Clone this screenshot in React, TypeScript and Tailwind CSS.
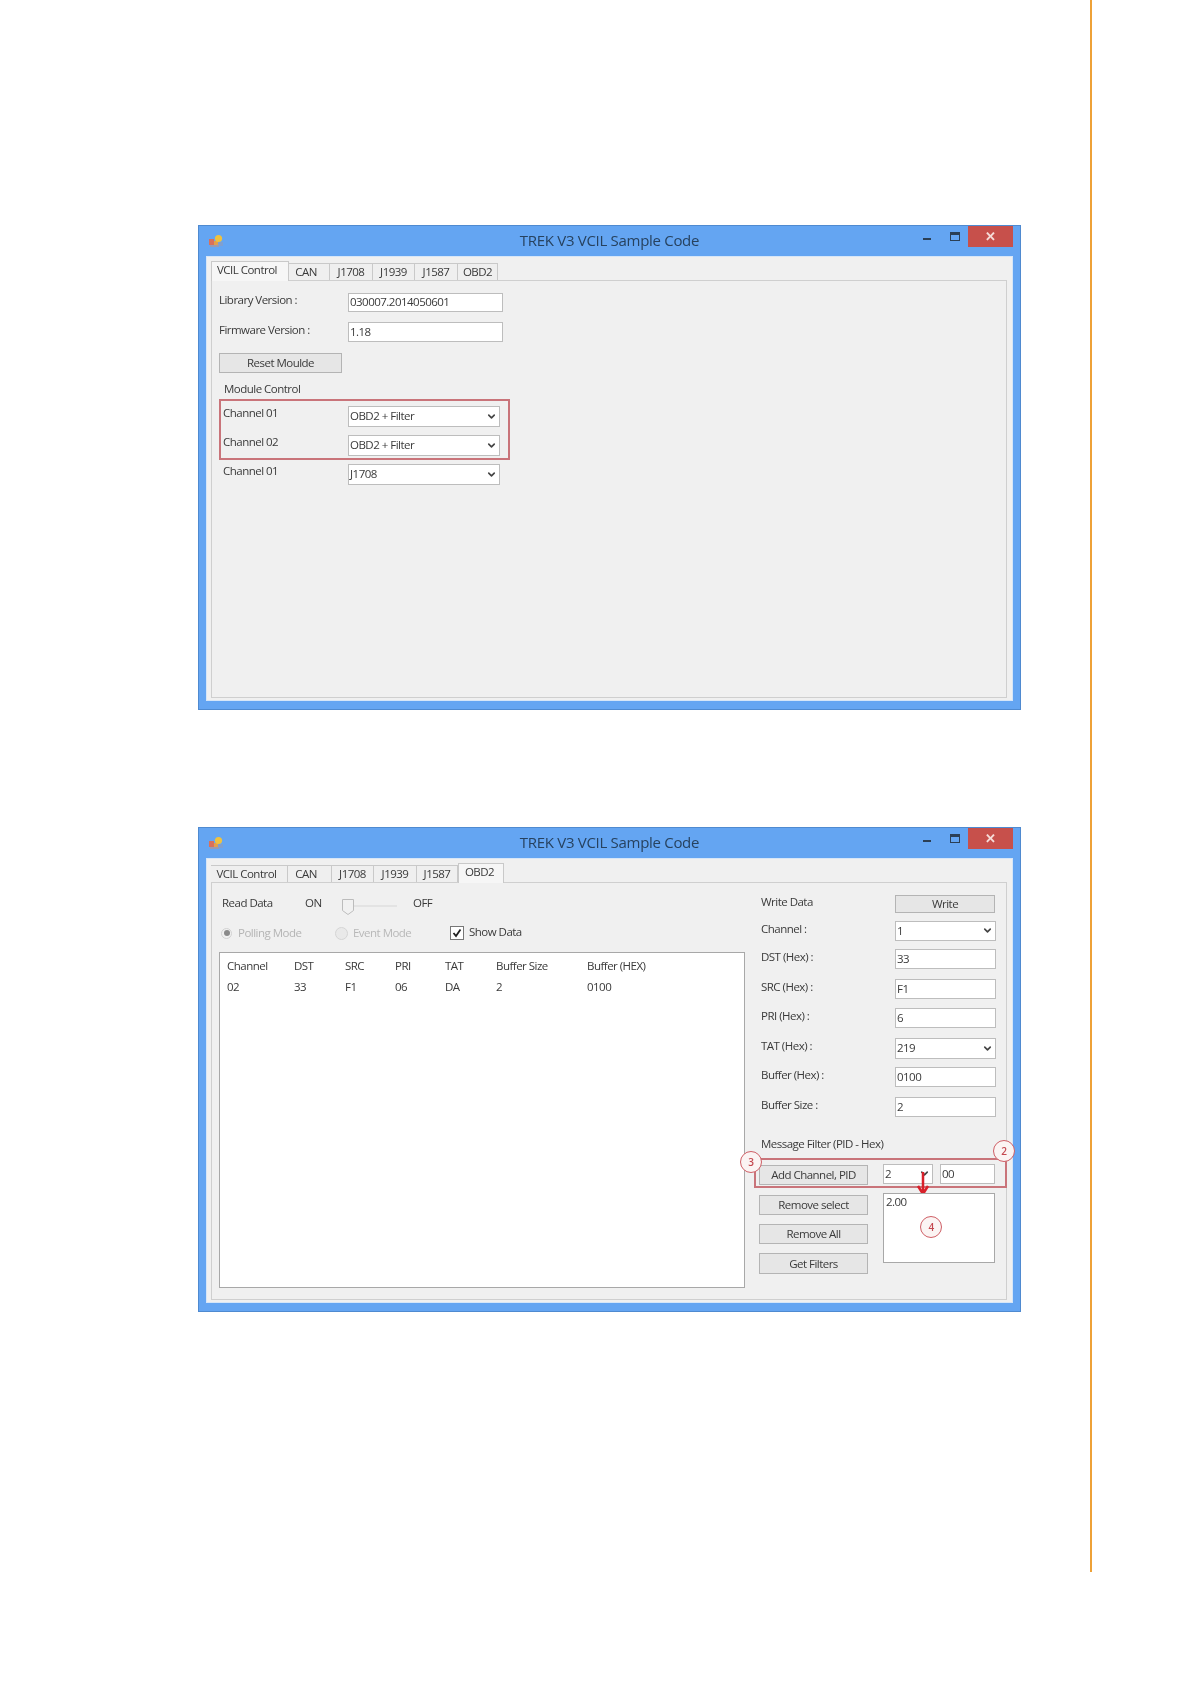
import { ChevronDown } from "lucide-react";

const TEXT = "text-[11.5px] leading-[14px] tracking-[-0.045em] text-[#3a3a3a]";
const FIELD = "border border-[#bdbdbd] bg-white pl-[1px] pb-[1px] flex items-center";
const BUTTON = "flex items-center justify-center border border-[#b4b4b4] bg-[#e6e6e6]";

type Tab = { label: string; width: string; active?: boolean };

const TABS_CONTROL: Tab[] = [
  { label: "VCIL Control", width: "w-[78px] pr-[6px]", active: true },
  { label: "CAN", width: "w-[41px] pr-[6px]" },
  { label: "J1708", width: "w-[43px]" },
  { label: "J1939", width: "w-[42px]" },
  { label: "J1587", width: "w-[43px]" },
  { label: "OBD2", width: "w-[40px]" },
];

const TABS_OBD: Tab[] = [
  { label: "VCIL Control", width: "w-[77px] pr-[5px]" },
  { label: "CAN", width: "w-[44px] pr-[7px]" },
  { label: "J1708", width: "w-[42px]" },
  { label: "J1939", width: "w-[43px]" },
  { label: "J1587", width: "w-[41px]" },
  { label: "OBD2", width: "w-[46px] pr-[3px]", active: true },
];

const COLUMNS = [
  { label: "Channel", value: "02", width: "w-[67px]" },
  { label: "DST", value: "33", width: "w-[51px]" },
  { label: "SRC", value: "F1", width: "w-[50px]" },
  { label: "PRI", value: "06", width: "w-[50px]" },
  { label: "TAT", value: "DA", width: "w-[51px]" },
  { label: "Buffer Size", value: "2", width: "w-[91px]" },
  { label: "Buffer (HEX)", value: "0100", width: "w-[90px]" },
];

const WRITE_FIELDS = [
  { label: "Channel :", value: "1", select: true, row: "mt-[8px] h-[20px]" },
  { label: "DST (Hex) :", value: "33", row: "mt-[8px] h-[20px]" },
  { label: "SRC (Hex) :", value: "F1", row: "mt-[10px] h-[20px]" },
  { label: "PRI (Hex) :", value: "6", row: "mt-[9px] h-[20px]" },
  { label: "TAT (Hex) :", value: "219", select: true, row: "mt-[10px] h-[21px]" },
  { label: "Buffer (Hex) :", value: "0100", focus: true, row: "mt-[8px] h-[20px]" },
  { label: "Buffer Size :", value: "2", row: "mt-[10px] h-[20px]" },
];

function Chevron() {
  return <ChevronDown className="ml-auto mr-[2px] h-[11px] w-[11px] text-[#444]" strokeWidth={3.5} />;
}

function WindowIcon() {
  return (
    <svg width="15" height="14" viewBox="0 0 15 14">
      <rect x="0" y="5" width="5" height="6" fill="#d9705a" />
      <rect x="5" y="7" width="4" height="5" fill="#e2a04c" />
      <circle cx="9.5" cy="4.5" r="3.6" fill="#efc23f" />
      <rect x="9" y="8" width="5" height="4" fill="#7f9fd0" />
      <rect x="1" y="11" width="9" height="2" fill="#9a9ab0" />
    </svg>
  );
}

function AppWindow({ tabs, children }: { tabs: Tab[]; children: React.ReactNode }) {
  return (
    <div className="flex h-[485px] w-[823px] flex-col border border-[#4f8ad0] bg-[#64a5f2] blur-[0.5px]">
      {/* title bar */}
      <div className="grid h-[30px] shrink-0 grid-cols-[1fr_auto_1fr]">
        <div className="flex items-center pl-[10px]">
          <WindowIcon />
        </div>
        <div className="pt-[4px] text-[15px] leading-[20px] tracking-[-0.02em] text-[#27425f]">
          TREK V3 VCIL Sample Code
        </div>
        <div className="flex items-start justify-end pr-[7px]">
          <div className="mr-[19px] mt-[12px] h-[2px] w-[8px] bg-[#2b3f55]" />
          <div className="mr-[8px] mt-[6px] h-[9px] w-[10px] border border-t-[3px] border-[#2b3f55]" />
          <div className="flex h-[21px] w-[45px] items-center justify-center bg-[#c7504b] text-[13px] font-bold leading-none text-[#f6dcd8]">
            ✕
          </div>
        </div>
      </div>

      {/* client area */}
      <div className="mx-[7px] mb-[8px] flex flex-1 flex-col border border-[#d6e6f8] bg-[#f0f0f0] pl-[4px] pr-[5px] pb-[2px]">
        <div className="relative z-10 flex h-[23px] shrink-0 items-end">
          {tabs.map((t) => (
            <div
              key={t.label}
              className={`flex items-center justify-center border border-[#c9c9c9] ${t.width} ${
                t.active
                  ? "-mb-px h-[20px] border-b-0 bg-[#f6f6f6] pb-[4px]"
                  : "h-[17px] border-l-0 border-b-0 bg-[#efefef] pb-[1px]"
              } ${TEXT}`}
            >
              {t.label}
            </div>
          ))}
        </div>
        <div className="flex-1 border border-[#cfcfcf] bg-[#f0f0f0]">{children}</div>
      </div>
    </div>
  );
}

function ChannelRow({ label, value, className = "" }: { label: string; value: string; className?: string }) {
  return (
    <div className={`flex h-[21px] items-start ${className}`}>
      <div className={`w-[125px] ${TEXT}`}>{label}</div>
      <div className={`h-[21px] w-[152px] ${FIELD} ${TEXT}`}>
        {value}
        <Chevron />
      </div>
    </div>
  );
}

function ControlPanel() {
  return (
    <div className="pl-[7px] pt-[12px]">
      <div className="flex h-[19px] items-center">
        <div className={`w-[129px] pb-[5px] ${TEXT}`}>Library Version :</div>
        <div className={`h-[19px] w-[155px] ${FIELD} ${TEXT}`}>030007.2014050601</div>
      </div>
      <div className="mt-[10px] flex h-[20px] items-center">
        <div className={`w-[129px] pb-[5px] ${TEXT}`}>Firmware Version :</div>
        <div className={`h-[20px] w-[155px] ${FIELD} ${TEXT}`}>1.18</div>
      </div>
      <div className={`mt-[11px] h-[20px] w-[123px] ${BUTTON} ${TEXT}`}>Reset Moulde</div>
      <div className={`ml-[5px] mt-[9px] ${TEXT}`}>Module Control</div>

      <div className="mt-[3px] h-[61px] w-[291px] border-2 border-[#c9747a] pl-[2px] pt-[5px]">
        <ChannelRow label="Channel 01" value="OBD2 + Filter" />
        <ChannelRow label="Channel 02" value="OBD2 + Filter" className="mt-[8px]" />
      </div>
      <ChannelRow label="Channel 01" value="J1708" className="ml-[4px] mt-[4px]" />
    </div>
  );
}

function Callout({ n, className }: { n: number; className: string }) {
  return (
    <div
      className={`absolute flex h-[22px] w-[22px] items-center justify-center rounded-full border-[1.5px] border-[#cf5f66] bg-[#fbf4f3] text-[10px] font-semibold text-[#c4474e] ${className}`}
    >
      {n}
    </div>
  );
}

function ObdPanel() {
  return (
    <div className="flex">
      {/* read data + list */}
      <div className="ml-[7px] mr-[14px] w-[526px] pt-[12px]">
        <div className="flex h-[16px] items-start pl-[3px]">
          <div className={`w-[83px] pt-[1px] ${TEXT}`}>Read Data</div>
          <div className={`w-[37px] pt-[1px] ${TEXT}`}>ON</div>
          <svg width="71" height="20" viewBox="0 0 71 20" className="shrink-0">
            <rect x="11" y="10" width="44" height="2" fill="#e3e3e3" />
            <path d="M0.5 4.5H11.5V15.5L6 19.5L0.5 15.5Z" fill="#f1f1f1" stroke="#bcbcbc" />
          </svg>
          <div className={`pt-[1px] ${TEXT}`}>OFF</div>
        </div>

        <div className="mt-[15px] flex h-[14px] items-center pl-[3px]">
          <div className="flex w-[113px] items-center">
            <span className="ml-[-1px] flex h-[11px] w-[11px] items-center justify-center rounded-full border border-[#d2d2d2]">
              <span className="h-[6px] w-[6px] rounded-full bg-[#8a8a8a]" />
            </span>
            <span className={`ml-[6px] ${TEXT} text-[#b4b4b4]`}>Polling Mode</span>
          </div>
          <div className="flex w-[115px] items-center">
            <span className="h-[13px] w-[13px] rounded-full border border-[#d5d5d5] bg-[#e9e9e9]" />
            <span className={`ml-[5px] ${TEXT} text-[#b8b8b8]`}>Event Mode</span>
          </div>
          <span className="flex h-[14px] w-[14px] items-center justify-center border border-[#777] bg-white">
            <svg width="10" height="10" viewBox="0 0 10 10">
              <path d="M1.5 5L4 8L8.5 1.5" fill="none" stroke="#222" strokeWidth="1.8" />
            </svg>
          </span>
          <span className={`mb-[3px] ml-[5px] ${TEXT}`}>Show Data</span>
        </div>

        <div className="mt-[12px] h-[336px] border border-[#a8a8a8] bg-white pl-[7px]">
          <div className={`flex pt-[6px] ${TEXT}`}>
            {COLUMNS.map((c) => (
              <div key={c.label} className={c.width}>
                {c.label}
              </div>
            ))}
          </div>
          <div className={`mt-[7px] flex ${TEXT}`}>
            {COLUMNS.map((c) => (
              <div key={c.label} className={c.width}>
                {c.value}
              </div>
            ))}
          </div>
        </div>
      </div>

      {/* write data + filters */}
      <div className="w-[246px] pt-[12px]">
        <div className="flex h-[18px] items-center">
          <div className={`w-[136px] pb-[5px] pl-[2px] ${TEXT}`}>Write Data</div>
          <div className={`h-[18px] w-[100px] ${BUTTON} ${TEXT}`}>Write</div>
        </div>
        {WRITE_FIELDS.map((f) => (
          <div key={f.label} className={`flex items-center ${f.row}`}>
            <div className={`w-[136px] pb-[5px] pl-[2px] ${TEXT}`}>{f.label}</div>
            <div
              className={`h-full w-[101px] ${FIELD} ${TEXT} ${f.focus ? "border-[#7fb3c8]" : ""}`}
            >
              {f.value}
              {f.select && <Chevron />}
            </div>
          </div>
        ))}

        <div className={`ml-[2px] mt-[20px] ${TEXT}`}>Message Filter (PID - Hex)</div>

        <div className="relative -ml-[5px] mt-[7px] flex h-[30px] w-[253px] items-start border-2 border-[#c9747a] pl-[3px] pt-[4px]">
          <div className={`mt-px h-[20px] w-[109px] ${BUTTON} ${TEXT}`}>Add Channel, PID</div>
          <div className={`ml-[15px] h-[20px] w-[50px] ${FIELD} ${TEXT}`}>
            2
            <Chevron />
          </div>
          <div className={`ml-[7px] h-[20px] w-[55px] ${FIELD} ${TEXT}`}>00</div>
          <svg width="14" height="24" viewBox="0 0 14 24" className="absolute left-[160px] top-[12px]">
            <path d="M7 0V20M2 14L7 22L12 14" fill="none" stroke="#d8202a" strokeWidth="2.5" />
          </svg>
          <Callout n={3} className="left-[-16px] top-[-9px]" />
          <Callout n={2} className="left-[237px] top-[-20px]" />
        </div>

        <div className="mt-[5px] flex items-start">
          <div className="mt-[2px] flex w-[109px] flex-col gap-[9px]">
            <div className={`h-[20px] ${BUTTON} ${TEXT}`}>Remove select</div>
            <div className={`h-[20px] ${BUTTON} ${TEXT}`}>Remove All</div>
            <div className={`h-[21px] ${BUTTON} ${TEXT}`}>Get Filters</div>
          </div>
          <div className={`relative ml-[15px] h-[70px] w-[112px] border border-[#a8a8a8] bg-white pl-[2px] pt-[1px] ${TEXT}`}>
            2.00
            <Callout n={4} className="left-[36px] top-[22px]" />
          </div>
        </div>
      </div>
    </div>
  );
}

export default function App() {
  return (
    <div className="flex h-[1684px] w-[1190px] bg-white font-['Open_Sans','Noto_Sans',sans-serif]">
      <div className="w-[1090px] pl-[198px] pt-[225px]">
        <AppWindow tabs={TABS_CONTROL}>
          <ControlPanel />
        </AppWindow>
        <div className="mt-[117px]">
          <AppWindow tabs={TABS_OBD}>
            <ObdPanel />
          </AppWindow>
        </div>
      </div>
      <div className="h-[1572px] w-[2px] bg-[#eea137]" />
    </div>
  );
}
